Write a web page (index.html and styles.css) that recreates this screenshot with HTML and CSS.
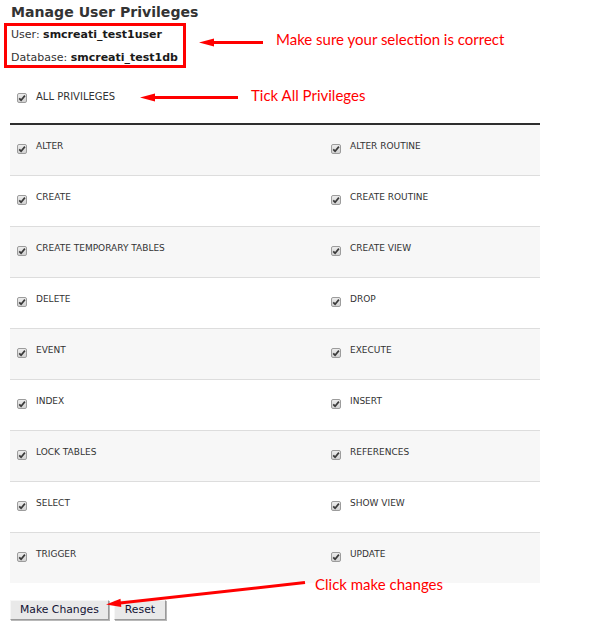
FILE: index.html
```html
<!DOCTYPE html>
<html>
<head>
<meta charset="utf-8">
<link rel="stylesheet" href="styles.css">
</head>
<body>
<div class="page">
  <h1 class="title">Manage User Privileges</h1>
  <div class="selection">
    <div class="sel-line">User: <strong>smcreati_test1user</strong></div>
    <div class="sel-line">Database: <strong>smcreati_test1db</strong></div>
  </div>

  <label class="all-priv"><span class="cb"><svg viewBox="0 0 8 8" width="8" height="8"><path d="M1.2 4.3 L3.1 6.2 L6.9 1.6" /></svg></span>ALL PRIVILEGES</label>

  <div class="priv-table">
    <div class="priv-row">
      <label class="priv"><span class="cb"><svg viewBox="0 0 8 8" width="8" height="8"><path d="M1.2 4.3 L3.1 6.2 L6.9 1.6" /></svg></span>ALTER</label>
      <label class="priv"><span class="cb"><svg viewBox="0 0 8 8" width="8" height="8"><path d="M1.2 4.3 L3.1 6.2 L6.9 1.6" /></svg></span>ALTER ROUTINE</label>
    </div>
    <div class="priv-row">
      <label class="priv"><span class="cb"><svg viewBox="0 0 8 8" width="8" height="8"><path d="M1.2 4.3 L3.1 6.2 L6.9 1.6" /></svg></span>CREATE</label>
      <label class="priv"><span class="cb"><svg viewBox="0 0 8 8" width="8" height="8"><path d="M1.2 4.3 L3.1 6.2 L6.9 1.6" /></svg></span>CREATE ROUTINE</label>
    </div>
    <div class="priv-row">
      <label class="priv"><span class="cb"><svg viewBox="0 0 8 8" width="8" height="8"><path d="M1.2 4.3 L3.1 6.2 L6.9 1.6" /></svg></span>CREATE TEMPORARY TABLES</label>
      <label class="priv"><span class="cb"><svg viewBox="0 0 8 8" width="8" height="8"><path d="M1.2 4.3 L3.1 6.2 L6.9 1.6" /></svg></span>CREATE VIEW</label>
    </div>
    <div class="priv-row">
      <label class="priv"><span class="cb"><svg viewBox="0 0 8 8" width="8" height="8"><path d="M1.2 4.3 L3.1 6.2 L6.9 1.6" /></svg></span>DELETE</label>
      <label class="priv"><span class="cb"><svg viewBox="0 0 8 8" width="8" height="8"><path d="M1.2 4.3 L3.1 6.2 L6.9 1.6" /></svg></span>DROP</label>
    </div>
    <div class="priv-row">
      <label class="priv"><span class="cb"><svg viewBox="0 0 8 8" width="8" height="8"><path d="M1.2 4.3 L3.1 6.2 L6.9 1.6" /></svg></span>EVENT</label>
      <label class="priv"><span class="cb"><svg viewBox="0 0 8 8" width="8" height="8"><path d="M1.2 4.3 L3.1 6.2 L6.9 1.6" /></svg></span>EXECUTE</label>
    </div>
    <div class="priv-row">
      <label class="priv"><span class="cb"><svg viewBox="0 0 8 8" width="8" height="8"><path d="M1.2 4.3 L3.1 6.2 L6.9 1.6" /></svg></span>INDEX</label>
      <label class="priv"><span class="cb"><svg viewBox="0 0 8 8" width="8" height="8"><path d="M1.2 4.3 L3.1 6.2 L6.9 1.6" /></svg></span>INSERT</label>
    </div>
    <div class="priv-row">
      <label class="priv"><span class="cb"><svg viewBox="0 0 8 8" width="8" height="8"><path d="M1.2 4.3 L3.1 6.2 L6.9 1.6" /></svg></span>LOCK TABLES</label>
      <label class="priv"><span class="cb"><svg viewBox="0 0 8 8" width="8" height="8"><path d="M1.2 4.3 L3.1 6.2 L6.9 1.6" /></svg></span>REFERENCES</label>
    </div>
    <div class="priv-row">
      <label class="priv"><span class="cb"><svg viewBox="0 0 8 8" width="8" height="8"><path d="M1.2 4.3 L3.1 6.2 L6.9 1.6" /></svg></span>SELECT</label>
      <label class="priv"><span class="cb"><svg viewBox="0 0 8 8" width="8" height="8"><path d="M1.2 4.3 L3.1 6.2 L6.9 1.6" /></svg></span>SHOW VIEW</label>
    </div>
    <div class="priv-row">
      <label class="priv"><span class="cb"><svg viewBox="0 0 8 8" width="8" height="8"><path d="M1.2 4.3 L3.1 6.2 L6.9 1.6" /></svg></span>TRIGGER</label>
      <label class="priv"><span class="cb"><svg viewBox="0 0 8 8" width="8" height="8"><path d="M1.2 4.3 L3.1 6.2 L6.9 1.6" /></svg></span>UPDATE</label>
    </div>
  </div>

  <div class="actions">
    <button class="btn">Make Changes</button>
    <button class="btn">Reset</button>
  </div>

  <div class="annotations">
    <svg class="arrows" width="607" height="627" viewBox="0 0 607 627">
      <g fill="#ff0000" stroke="#ff0000" stroke-width="3" stroke-linecap="butt">
        <line x1="263" y1="42.5" x2="212" y2="42.5"/>
        <polygon stroke="none" points="199,42.5 214,38.5 214,46.5"/>
        <line x1="238" y1="97.5" x2="153" y2="97.5"/>
        <polygon stroke="none" points="140,97.5 155,93.5 155,101.5"/>
        <line x1="305" y1="582.5" x2="120" y2="603"/>
        <polygon stroke="none" points="106,604.5 121.3,607 120.5,598.8"/>
      </g>
    </svg>
    <span class="note note-1">Make sure your selection is correct</span>
    <span class="note note-2">Tick All Privileges</span>
    <span class="note note-3">Click make changes</span>
  </div>
</div>
</body>
</html>
```

FILE: styles.css
```css
html, body {
  margin: 0;
  padding: 0;
  background: #ffffff;
}

.page {
  position: relative;
  width: 607px;
  height: 627px;
  overflow: hidden;
  font-family: "DejaVu Sans", Verdana, sans-serif;
  color: #333333;
}

.title {
  margin: 4px 0 0 11px;
  font-size: 14.1px;
  line-height: 16px;
  font-weight: bold;
  color: #333333;
}

.selection {
  margin: 3px 0 0 4px;
  width: 172px;
  border: 3px solid #ff0000;
  padding: 2px 0 0 4px;
  display: flex;
  flex-direction: column;
  gap: 9px;
}

.sel-line {
  font-size: 11px;
  line-height: 14px;
  color: #333333;
  white-space: nowrap;
}

.sel-line strong {
  color: #1a1a1a;
}

.all-priv {
  display: flex;
  align-items: flex-start;
  margin: 22px 0 0 17px;
  font-size: 10px;
  line-height: 14px;
  color: #333333;
}

.all-priv .cb {
  margin-top: 3px;
}

.cb {
  box-sizing: border-box;
  width: 10px;
  height: 10px;
  flex: none;
  margin-right: 9px;
  border: 1px solid #9c9c9c;
  border-radius: 2px;
  background: linear-gradient(#ececec, #d2d2d2);
  display: flex;
  align-items: center;
  justify-content: center;
}

.cb svg {
  display: block;
}

.cb path {
  fill: none;
  stroke: #3a3a3a;
  stroke-width: 1.7;
}

.priv-table {
  margin: 19px 0 0 10px;
  width: 530px;
  border-top: 2px solid #2e2e2e;
}

.priv-row {
  display: grid;
  grid-template-columns: 315px 1fr;
  height: 50px;
  border-bottom: 1px solid #dddddd;
}

.priv-row:nth-child(odd) {
  background: #f7f7f7;
}

.priv-row:last-child {
  border-bottom: none;
}

.priv {
  display: flex;
  align-items: flex-start;
  padding: 15px 0 0 7px;
  font-size: 9px;
  line-height: 12px;
  color: #333333;
}

.priv + .priv {
  margin-left: -1px;
}

.priv .cb {
  margin-top: 4px;
}

.actions {
  display: flex;
  gap: 5px;
  margin: 17px 0 0 10px;
}

.btn {
  box-sizing: border-box;
  height: 20px;
  padding: 0 9px;
  font-family: "DejaVu Sans", Verdana, sans-serif;
  font-size: 10.8px;
  line-height: 16px;
  color: #111133;
  background: #e9e9e9;
  border: 1px solid;
  border-color: #f6f6f6 #9a9a9a #9a9a9a #f6f6f6;
  box-shadow: 1px 1px 0 #b8b8b8;
  border-radius: 0;
}

.btn + .btn {
  padding: 0 10px;
}

.annotations {
  position: absolute;
  inset: 0;
  pointer-events: none;
}

.arrows {
  position: absolute;
  left: 0;
  top: 0;
}

.note {
  position: absolute;
  font-family: Lato, "Open Sans", sans-serif;
  font-size: 15px;
  line-height: 15px;
  color: #ff0000;
  white-space: nowrap;
}

.note-1 { left: 276px; top: 32px; }
.note-2 { left: 251px; top: 88px; }
.note-3 { left: 315px; top: 577px; }
```
